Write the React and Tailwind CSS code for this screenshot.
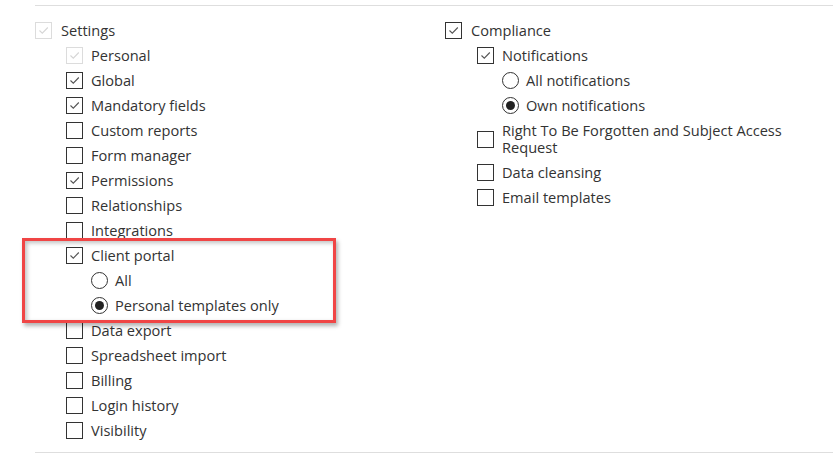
import React from "react";

function Check({ checked, disabled }) {
  return (
    <span
      className={`w-[17px] h-[17px] shrink-0 border flex items-center justify-center bg-white ${
        disabled ? "border-[#dcdcdc]" : "border-[#333]"
      }`}
    >
      {checked && (
        <svg width="11" height="9" viewBox="0 0 11 9">
          <path
            d="M1.5 4.5 L4.3 7.2 L9.8 1.5"
            fill="none"
            stroke={disabled ? "#d6d6d6" : "#555"}
            strokeWidth="1.1"
          />
        </svg>
      )}
    </span>
  );
}

function Radio({ on }) {
  return (
    <span className="w-[17px] h-[17px] shrink-0 rounded-full border border-[#333] flex items-center justify-center bg-white">
      {on && <span className="w-[9px] h-[9px] rounded-full bg-[#222]" />}
    </span>
  );
}

function Row({ children, label, gap = "gap-[9px]", className = "" }) {
  return (
    <div className={`flex items-center ${gap} ${className}`}>
      {children}
      <span className="leading-[17px]">{label}</span>
    </div>
  );
}

const settings = [
  ["Personal", true, true],
  ["Global", true],
  ["Mandatory fields", true],
  ["Custom reports", false],
  ["Form manager", false],
  ["Permissions", true],
  ["Relationships", false],
  ["Integrations", false],
];

const settingsAfter = [
  "Data export",
  "Spreadsheet import",
  "Billing",
  "Login history",
  "Visibility",
];

export default function App() {
  return (
    <div
      className="bg-white w-[833px] h-[454px] overflow-hidden pt-[5px] pl-[35px] text-[14.6px] text-[#333]"
      style={{ fontFamily: '"Open Sans", "Liberation Sans", sans-serif' }}
    >
      <div className="border-t border-b border-[#dedede] pt-[16px] pb-[13px] grid grid-cols-[410px_1fr]">
        {/* Settings column */}
        <div className="flex flex-col gap-2">
          <Row label="Settings">
            <Check checked disabled />
          </Row>
          <div className="pl-[31px] flex flex-col gap-2">
            {settings.map(([name, checked, disabled]) => (
              <Row key={name} label={name} gap="gap-[8px]">
                <Check checked={checked} disabled={disabled} />
              </Row>
            ))}
            <div className="relative flex flex-col gap-2">
              <div className="absolute left-[-44px] top-[-9px] w-[314px] h-[85px] border-[3px] border-[#f04545] shadow-[2px_3px_4px_rgba(0,0,0,0.3),inset_2px_2px_4px_rgba(0,0,0,0.25)] pointer-events-none" />
              <Row label="Client portal" gap="gap-[8px]">
                <Check checked />
              </Row>
              <div className="pl-[25px] flex flex-col gap-2">
                <Row label="All" gap="gap-[7px]">
                  <Radio />
                </Row>
                <Row label="Personal templates only" gap="gap-[7px]">
                  <Radio on />
                </Row>
              </div>
            </div>
            {settingsAfter.map((name) => (
              <Row key={name} label={name} gap="gap-[8px]">
                <Check />
              </Row>
            ))}
          </div>
        </div>

        {/* Compliance column */}
        <div className="flex flex-col gap-2">
          <Row label="Compliance">
            <Check checked />
          </Row>
          <div className="pl-[32px] flex flex-col gap-2">
            <Row label="Notifications" gap="gap-[8px]">
              <Check checked />
            </Row>
            <div className="pl-[25px] flex flex-col gap-2">
              <Row label="All notifications" gap="gap-[7px]">
                <Radio />
              </Row>
              <Row label="Own notifications" gap="gap-[7px]">
                <Radio on />
              </Row>
            </div>
            <div className="flex items-center gap-[8px]">
              <Check />
              <span className="leading-[17px] w-[295px]">
                Right To Be Forgotten and Subject Access Request
              </span>
            </div>
            <Row label="Data cleansing" gap="gap-[8px]">
              <Check />
            </Row>
            <Row label="Email templates" gap="gap-[8px]">
              <Check />
            </Row>
          </div>
        </div>
      </div>
    </div>
  );
}
